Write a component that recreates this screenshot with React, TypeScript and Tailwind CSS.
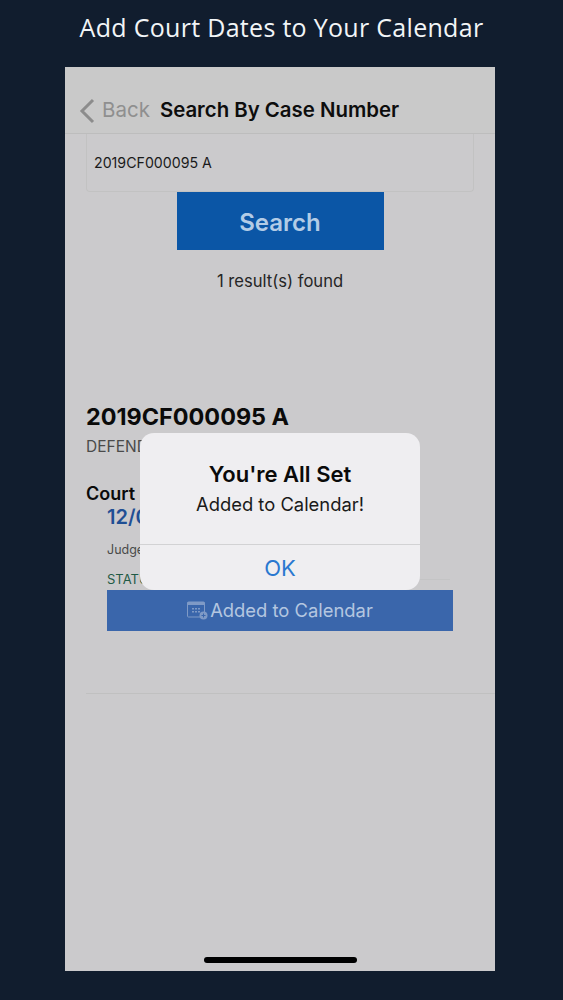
import React from "react";

const sf = { fontFamily: "Inter, 'Liberation Sans', sans-serif" };

function CalendarPlus() {
  return (
    <svg width="22" height="20" viewBox="0 0 22 20" fill="none" className="shrink-0">
      <rect x="0.5" y="1" width="17" height="15" rx="1" stroke="#7f9ac6" strokeWidth="1" />
      <rect x="0.5" y="1" width="17" height="3" fill="#7f9ac6" />
      <g fill="#7f9ac6">
        <rect x="5" y="7" width="2" height="1.5" />
        <rect x="8" y="7" width="2" height="1.5" />
        <rect x="11" y="7" width="2" height="1.5" />
        <rect x="5" y="10" width="2" height="1.5" />
        <rect x="8" y="10" width="2" height="1.5" />
        <rect x="11" y="10" width="2" height="1.5" />
      </g>
      <circle cx="16.5" cy="14.5" r="4" fill="#7f9ac6" />
      <path d="M16.5 12.5v4M14.5 14.5h4" stroke="#3a66ab" strokeWidth="1" />
    </svg>
  );
}

export default function App() {
  return (
    <div className="w-[563px] h-[1000px] bg-[#111d2e] flex flex-col overflow-hidden" style={sf}>
      <h1 className="h-[67px] pb-[11px] flex items-center justify-center text-[25px] font-medium tracking-[0.3px] text-[#f2f5f7] whitespace-nowrap font-['Open_Sans',sans-serif]">
        Add Court Dates to Your Calendar
      </h1>
      <div className="relative ml-[65px] w-[430px] h-[904px] bg-[#cbcacc] flex flex-col">
        <header className="h-[67px] shrink-0 bg-[#c9c9c9] border-b border-[#bdbdbd] flex items-end pb-[8px] pl-[14px]">
          <svg width="16" height="26" viewBox="0 0 16 26" fill="none" className="mb-[1px]">
            <path d="M14 2 L3 13 L14 24" stroke="#8c8c8c" strokeWidth="3" />
          </svg>
          <span className="ml-[7px] text-[20.5px] leading-[30px] text-[#8f8f8f]">Back</span>
          <span className="ml-[10px] text-[20.4px] leading-[30px] font-semibold text-[#0d0d0d]">Search By Case Number</span>
        </header>
        <div className="mx-[21px] h-[58px] shrink-0 rounded-b-[4px] border border-t-0 border-[#c2c2c2] flex items-center pl-[7px] pt-[1px] text-[14.2px] text-[#1a1a1a]">
          2019CF000095 A
        </div>
        <button className="self-center w-[207px] h-[58px] shrink-0 bg-[#0b56a6] text-[#b3cce6] text-[24px] font-semibold pt-[3px]">
          Search
        </button>
        <p className="mt-[19px] text-center text-[16.6px] leading-[22px] text-[#262626] pt-[1px]">1 result(s) found</p>
        <h2 className="mt-[111px] ml-[21px] text-[23.4px] leading-[28px] font-bold text-[#0a0a0a]">2019CF000095 A</h2>
        <p className="mt-[6px] ml-[21px] text-[15.5px] leading-[20px] text-[#4a4a4a]">DEFENDANT</p>
        <p className="mt-[25px] ml-[21px] text-[18px] leading-[24px] font-semibold text-[#0a0a0a]">Court</p>
        <p className="mt-[-1px] ml-[42px] text-[20px] leading-[24px] font-semibold text-[#1f4f94]">12/0</p>
        <p className="mt-[12px] ml-[42px] text-[12.5px] leading-[18px] text-[#4a4a4a]">Judge</p>
        <div className="mt-[11px] ml-[42px] w-[343px] flex items-center text-[13px] leading-[18px] text-[#1f5a45]">
          <span>STATUS</span>
          <div className="flex-1 h-px bg-[#c4c4c5]" />
        </div>
        <div className="mt-[2px] ml-[42px] w-[346px] h-[41px] bg-[#3a66ab] flex items-center justify-center gap-[1px] text-[#b4c6e0] text-[18.4px]">
          <CalendarPlus />
          <span>Added to Calendar</span>
        </div>
        <div className="mt-[62px] ml-[21px] h-px bg-[#c0c0c0]" />
        <div className="absolute left-[75px] top-[366px] w-[280px] h-[157px] rounded-[14px] bg-[#efeef1] flex flex-col">
          <div className="flex-1 flex flex-col items-center pt-[27px]">
            <p className="text-[22px] leading-[28px] font-semibold text-[#0a0a0a]">You're All Set</p>
            <p className="mt-[3px] text-[18.4px] leading-[26px] text-[#1a1a1a]">Added to Calendar!</p>
          </div>
          <div className="h-[46px] border-t border-[#d2d2d4] pt-[1px] flex items-center justify-center text-[22px] text-[#2a78d0]">
            OK
          </div>
        </div>
        <div className="absolute left-[139px] bottom-[8px] w-[153px] h-[6px] rounded-full bg-[#000000]" />
      </div>
    </div>
  );
}
